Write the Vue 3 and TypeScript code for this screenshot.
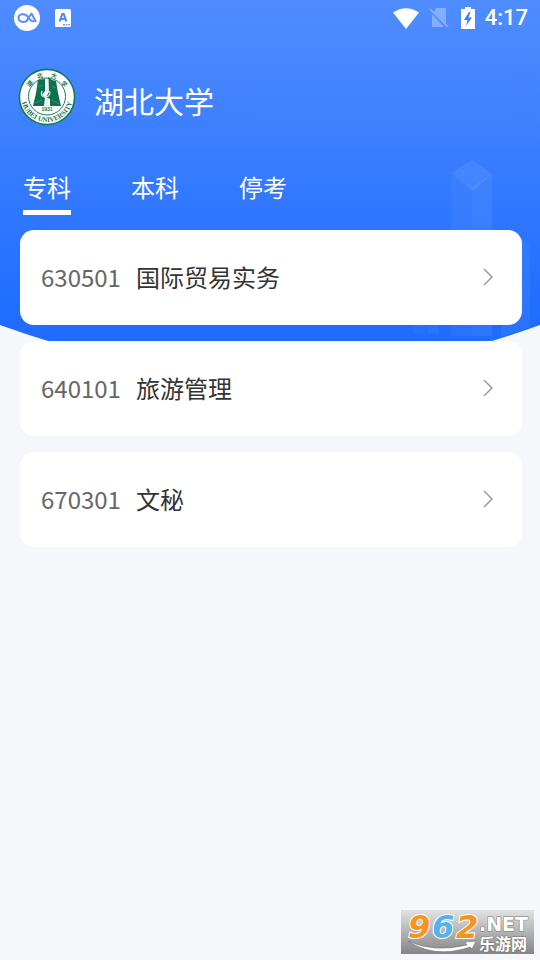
<script setup lang="ts">
import { computed, ref } from 'vue'

interface Major {
  code: string
  name: string
}

const tabs = ['专科', '本科', '停考']
const active = ref(0)

const majors: Major[][] = [
  [
    { code: '630501', name: '国际贸易实务' },
    { code: '640101', name: '旅游管理' },
    { code: '670301', name: '文秘' },
  ],
  [],
  [],
]

const visibleMajors = computed(() => majors[active.value])
</script>

<template>
  <div class="page">
    <svg class="backdrop" viewBox="0 0 540 360" preserveAspectRatio="none" aria-hidden="true">
      <defs>
        <linearGradient id="sky" x1="0" y1="0" x2="0" y2="1">
          <stop offset="0" stop-color="#4f8cff" />
          <stop offset="0.12" stop-color="#4a88ff" />
          <stop offset="0.95" stop-color="#1f6cff" />
          <stop offset="1" stop-color="#1f6cff" />
        </linearGradient>
      </defs>
      <path d="M0 0H540V325Q515 334 492 341H48Q25 334 0 325Z" fill="url(#sky)" />
      <g fill="#6ba6ff">
        <path d="M451 174L472 187V336H451Z" opacity=".12" />
        <path d="M472 187L492 174V336H472Z" opacity=".2" />
        <path d="M451 173L472 160L492 174L473 191Z" opacity=".26" />
        <path d="M501 245L521 239L530 247V327L501 337Z" opacity=".14" />
        <path d="M413 290H426V334H413Z" opacity=".1" />
        <path d="M427 290H439V334H427Z" opacity=".14" />
      </g>
    </svg>

    <div class="status">
      <div class="status-group">
        <svg width="26" height="26" viewBox="0 0 26 26" aria-hidden="true">
          <circle cx="13" cy="13" r="13" fill="#fff" />
          <path d="M14 15C11 18 4.500 17.500 4.500 13C4.500 8.500 11 8 14 12C16 15 18 17 20 16M13 15L17.500 8.500L22 17" fill="none" stroke="#5790f7" stroke-width="2" stroke-linejoin="round" />
        </svg>
        <svg width="16" height="18" viewBox="0 0 16 18" aria-hidden="true">
          <rect width="16" height="18" rx="1.5" fill="#fff" />
          <path d="M4.6 12.5L7.3 5H8.7L11.4 12.5M5.8 10H10.2" fill="none" stroke="#4d86f5" stroke-width="2" />
          <path d="M8 15.8H10M11 15.8H12.500M13.500 15.8H15" stroke="#6c9df8" stroke-width="1.4" />
        </svg>
      </div>
      <div class="status-group right">
        <svg width="26" height="21" viewBox="0 0 26 21" aria-hidden="true">
          <path d="M0 4.6Q13-4 26 4.6L13 21Z" fill="#fff" />
        </svg>
        <svg width="20" height="22" viewBox="0 0 20 22" aria-hidden="true">
          <path d="M7 1H17V18L5 5Z M3 7L15 20H3Z" fill="#83adff" />
          <path d="M1 2L19 20" stroke="#83adff" stroke-width="1.8" />
        </svg>
        <svg class="battery" width="14" height="22" viewBox="0 0 14 22" aria-hidden="true">
          <path d="M4 0H10V2H14V22H0V2H4Z" fill="#fff" />
          <path d="M8 5L3 13H6.5L5 19L11 10.5H7.5L9.5 5Z" fill="#3e7ff5" />
        </svg>
        <span class="clock">4:17</span>
      </div>
    </div>

    <header class="school">
      <svg class="crest" viewBox="0 0 58 58" role="img" aria-label="湖北大学 HUBEI UNIVERSITY 1931">
        <defs>
          <path id="arc-bottom" d="M3 28A26 26 0 0 0 55 28" />
        </defs>
        <circle cx="29" cy="29" r="27.6" fill="#fff" stroke="#147a58" stroke-width="1.6" />
        <circle cx="29" cy="28.5" r="18.5" fill="#fff" stroke="#147a58" stroke-width="1" />
        <path d="M20 12L27 11V23L24 27L27 30L26 38H15L18 25Z M30 9L34 12L38 13L40 25L43 38H32V31L28 29L31 24Z" fill="#0b7250" />
        <path d="M30 11V23M24 23Q22 29 27 29Q32 29 32 24L28 22M29 30V38" stroke="#d5ece3" stroke-width="1.2" fill="none" />
        <path d="M17 35L24 32M34 32L41 36M20 19L25 17M34 18L38 20" stroke="#4b9c81" stroke-width=".7" fill="none" />
        <g class="crest-cn" text-anchor="middle">
          <text x="12" y="18" transform="rotate(-50 12 16)">湖</text>
          <text x="22" y="10" transform="rotate(-18 22 8)">北</text>
          <text x="36" y="10" transform="rotate(18 36 8)">大</text>
          <text x="46" y="18" transform="rotate(50 46 16)">学</text>
        </g>
        <text class="crest-year" x="29" y="43" text-anchor="middle">1931</text>
        <text class="crest-en"><textPath href="#arc-bottom" startOffset="50%" text-anchor="middle">HUBEI UNIVERSITY</textPath></text>
      </svg>
      <h1>湖北大学</h1>
    </header>

    <nav class="tabs">
      <button
        v-for="(tab, i) in tabs"
        :key="tab"
        type="button"
        :class="['tab', { active: i === active }]"
        @click="active = i"
      >{{ tab }}</button>
    </nav>

    <main class="list">
      <a v-for="major in visibleMajors" :key="major.code" class="card" href="#">
        <span class="code">{{ major.code }}</span>
        <span class="name">{{ major.name }}</span>
        <svg class="chevron" width="10" height="18" viewBox="0 0 10 18" aria-hidden="true">
          <path d="M1 1L9 9L1 17" fill="none" stroke="#999" stroke-width="1.5" />
        </svg>
      </a>
    </main>

    <svg class="mark" viewBox="0 0 133 44" role="img" aria-label="962.NET 乐游网">
      <defs>
        <linearGradient id="plate" x1="0" y1="0" x2="0" y2="1">
          <stop offset="0" stop-color="#e2e2e2" />
          <stop offset="1" stop-color="#858585" />
        </linearGradient>
      </defs>
      <rect width="133" height="44" fill="url(#plate)" />
      <g class="mark-num">
        <text x="7" y="28" fill="#f7941e">9</text>
        <text x="31" y="28" fill="#55b3e8">6</text>
        <text x="55" y="28" fill="#f7941e">2</text>
      </g>
      <path d="M7 31Q32 43 66 35L64 32L75 31L71 39L69 37Q34 49 7 31Z" fill="#fff" stroke="#777" stroke-width=".6" />
      <text class="mark-net" x="78" y="21">.NET</text>
      <text class="mark-cn" x="78" y="40">乐游网</text>
    </svg>
  </div>
</template>

<style>
body {
  margin: 0;
  background: #f5f7fa;
}
</style>

<style scoped>
.page {
  position: relative;
  min-height: 100vh;
  background: #f5f7fa;
  font-family: "Noto Sans CJK SC", sans-serif;
  overflow: hidden;
}

.backdrop {
  position: absolute;
  top: 0;
  left: 0;
  width: 100%;
  height: 360px;
}

.status,
.school,
.tabs,
.list {
  position: relative;
}

.status {
  display: flex;
  align-items: center;
  justify-content: space-between;
  height: 36px;
  padding: 0 12px 0 14px;
}

.status-group {
  display: flex;
  align-items: center;
  gap: 15px;
}

.status-group.right {
  gap: 10px;
}

.battery {
  margin-left: 2px;
}

.clock {
  font: 500 22px/36px Roboto, sans-serif;
  color: #fff;
}

.school {
  display: flex;
  align-items: center;
  gap: 18px;
  padding: 32px 18px 0;
}

.crest {
  width: 58px;
  height: 58px;
}

.crest-year {
  font: 700 5px "Liberation Sans", sans-serif;
  fill: #147a58;
}

.crest-cn {
  font: 700 6px/1 "Noto Sans CJK SC", sans-serif;
  fill: #147a58;
}

.crest-en {
  font: 700 7px "Liberation Serif", serif;
  fill: #147a58;
}

h1 {
  margin: 6px 0 0;
  font-size: 30px;
  font-weight: 400;
  line-height: 44px;
  color: #fff;
}

.tabs {
  display: flex;
  gap: 60px;
  padding: 43px 23px 0;
}

.tab {
  padding: 0 0 5px;
  border: 0;
  border-bottom: 5px solid transparent;
  background: none;
  font: inherit;
  font-size: 24px;
  line-height: 36px;
  color: #fff;
  cursor: pointer;
}

.tab.active {
  border-bottom-color: #fff;
}

.list {
  display: flex;
  flex-direction: column;
  gap: 16px;
  padding: 15px 18px 20px 20px;
}

.card {
  display: flex;
  align-items: center;
  gap: 15px;
  height: 95px;
  padding: 0 29px 2px 21px;
  box-sizing: border-box;
  border-radius: 14px;
  background: #fff;
  font-size: 24px;
  line-height: 36px;
  text-decoration: none;
}

.code {
  color: #666;
}

.name {
  color: #333;
}

.chevron {
  margin-left: auto;
}

.mark {
  position: absolute;
  right: 6px;
  bottom: 6px;
  width: 133px;
  height: 44px;
}

.mark-num {
  font: italic 700 32px "DejaVu Sans", sans-serif;
  stroke: #fff;
  stroke-width: 2px;
  paint-order: stroke;
}

.mark-net {
  font: 700 19px "DejaVu Sans", sans-serif;
  fill: #fff;
  stroke: #777;
  stroke-width: 1px;
  paint-order: stroke;
}

.mark-cn {
  font: 700 16px "Noto Sans CJK SC", sans-serif;
  fill: #fff;
  stroke: #777;
  stroke-width: 1px;
  paint-order: stroke;
}
</style>
